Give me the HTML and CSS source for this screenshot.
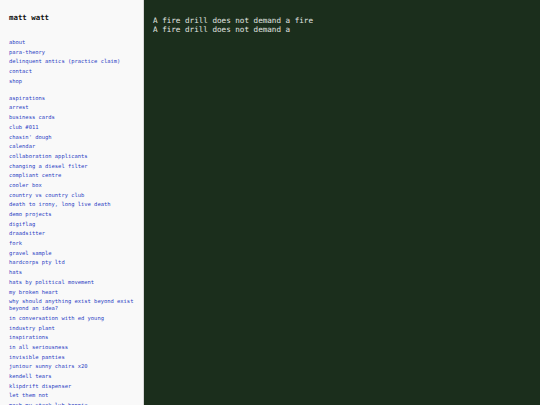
FILE: index.html
```html
<!DOCTYPE html>
<html>
<head>
<meta charset="utf-8">
<link rel="stylesheet" href="styles.css">
</head>
<body>
<div class="layout">
  <aside class="sidebar">
    <h1 class="title">matt watt</h1>
    <ul class="links">
      <li><a href="#">about</a></li>
      <li><a href="#">para-theory</a></li>
      <li><a href="#">delinquent antics (practice claim)</a></li>
      <li><a href="#">contact</a></li>
      <li><a href="#">shop</a></li>
    </ul>
    <ul class="links">
      <li><a href="#">aspirations</a></li>
      <li><a href="#">arrest</a></li>
      <li><a href="#">business cards</a></li>
      <li><a href="#">club #011</a></li>
      <li><a href="#">chasin' dough</a></li>
      <li><a href="#">calendar</a></li>
      <li><a href="#">collaboration applicants</a></li>
      <li><a href="#">changing a diesel filter</a></li>
      <li><a href="#">compliant centre</a></li>
      <li><a href="#">cooler box</a></li>
      <li><a href="#">country vs country club</a></li>
      <li><a href="#">death to irony, long live death</a></li>
      <li><a href="#">demo projects</a></li>
      <li><a href="#">digiflag</a></li>
      <li><a href="#">draadsitter</a></li>
      <li><a href="#">fork</a></li>
      <li><a href="#">gravel sample</a></li>
      <li><a href="#">hardcorps pty ltd</a></li>
      <li><a href="#">hats</a></li>
      <li><a href="#">hats by political movement</a></li>
      <li><a href="#">my broken heart</a></li>
      <li><a href="#">why should anything exist beyond exist beyond an idea?</a></li>
      <li><a href="#">in conversation with ed young</a></li>
      <li><a href="#">industry plant</a></li>
      <li><a href="#">inspirations</a></li>
      <li><a href="#">in all seriousness</a></li>
      <li><a href="#">invisible panties</a></li>
      <li><a href="#">juniour sunny chairs x20</a></li>
      <li><a href="#">kendell tears</a></li>
      <li><a href="#">klipdrift dispenser</a></li>
      <li><a href="#">let them not</a></li>
      <li><a href="#">mash my steak luh bonnie</a></li>
    </ul>
  </aside>
  <main class="content">
    <p class="line">A fire drill does not demand a fire</p>
    <p class="line">A fire drill does not demand a</p>
  </main>
</div>
</body>
</html>
```
FILE: styles.css
```css
html, body {
  margin: 0;
  padding: 0;
  height: 100%;
  overflow: hidden;
}
body {
  font-family: "DejaVu Sans Mono", monospace;
}
.layout {
  display: flex;
  height: 405px;
}
.sidebar {
  width: 134px;
  flex: 0 0 134px;
  background: #f9f9f9;
  border-right: 1px solid #d8d8d8;
  padding: 13px 0 0 9px;
  overflow: hidden;
}
.title {
  margin: 0 0 17px 0;
  font-size: 7.4px;
  line-height: 9px;
  font-weight: bold;
  color: #111;
}
.links {
  list-style: none;
  margin: 0 0 10px 0;
  padding: 0;
  display: flex;
  flex-direction: column;
  gap: 2.7px;
}
.links li {
  font-size: 5.45px;
  line-height: 7px;
}
.links a {
  color: #2b3ec4;
  text-decoration: none;
}
.content {
  flex: 1;
  background: #1b2e1c;
  padding: 16px 0 0 9px;
}
.line {
  margin: 0;
  font-size: 7.6px;
  line-height: 9.4px;
  color: #e2e6e2;
}
```
